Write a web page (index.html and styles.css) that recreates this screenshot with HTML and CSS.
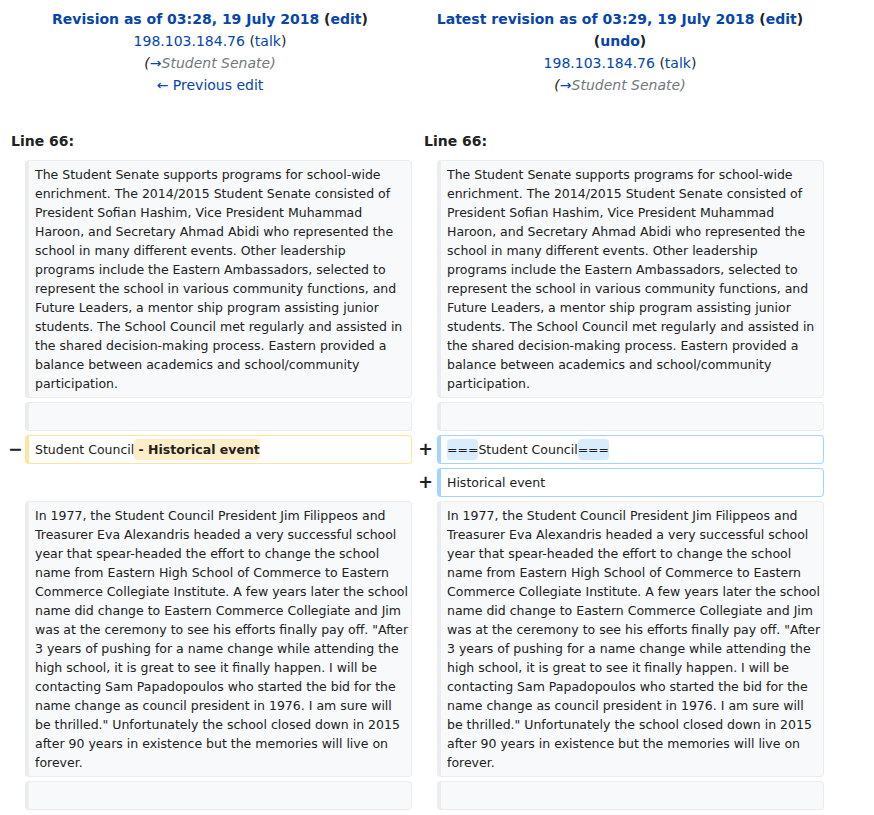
FILE: index.html
```html
<!DOCTYPE html>
<html>
<head>
<meta charset="utf-8">
<link rel="stylesheet" href="styles.css">
</head>
<body>
<div class="diff">
  <div class="rev-head">
    <div class="line title"><a href="#">Revision as of 03:28, 19 July 2018</a> <span class="paren">(<a href="#">edit</a>)</span></div>
    <div class="line"><a href="#">198.103.184.76</a> <span class="paren">(<a href="#">talk</a>)</span></div>
    <div class="line comment">(<a href="#">→</a>Student Senate)</div>
    <div class="line"><a href="#">← Previous edit</a></div>
  </div>
  <div class="rev-head">
    <div class="line title"><a href="#">Latest revision as of 03:29, 19 July 2018</a> <span class="paren">(<a href="#">edit</a>)</span></div>
    <div class="line title"><span class="paren">(<a href="#">undo</a>)</span></div>
    <div class="line"><a href="#">198.103.184.76</a> <span class="paren">(<a href="#">talk</a>)</span></div>
    <div class="line comment">(<a href="#">→</a>Student Senate)</div>
  </div>

  <div class="lineno">Line 66:</div>
  <div class="lineno lineno-right">Line 66:</div>

  <div class="marker"></div>
  <div class="cell context">The Student Senate supports programs for school-wide enrichment. The 2014/2015 Student Senate consisted of President Sofian Hashim, Vice President Muhammad Haroon, and Secretary Ahmad Abidi who represented the school in many different events. Other leadership programs include the Eastern Ambassadors, selected to represent the school in various community functions, and Future Leaders, a mentor ship program assisting junior students. The School Council met regularly and assisted in the shared decision-making process. Eastern provided a balance between academics and school/community participation.</div>
  <div class="marker"></div>
  <div class="cell context">The Student Senate supports programs for school-wide enrichment. The 2014/2015 Student Senate consisted of President Sofian Hashim, Vice President Muhammad Haroon, and Secretary Ahmad Abidi who represented the school in many different events. Other leadership programs include the Eastern Ambassadors, selected to represent the school in various community functions, and Future Leaders, a mentor ship program assisting junior students. The School Council met regularly and assisted in the shared decision-making process. Eastern provided a balance between academics and school/community participation.</div>

  <div class="marker"></div>
  <div class="cell context">&nbsp;</div>
  <div class="marker"></div>
  <div class="cell context">&nbsp;</div>

  <div class="marker">−</div>
  <div class="cell deleted">Student Council<del class="inl-del"> - Historical event</del></div>
  <div class="marker">+</div>
  <div class="cell added"><ins class="inl-ins">===</ins>Student Council<ins class="inl-ins">===</ins></div>

  <div class="marker"></div>
  <div class="blank"></div>
  <div class="marker">+</div>
  <div class="cell added">Historical event</div>

  <div class="marker"></div>
  <div class="cell context">In 1977, the Student Council President Jim Filippeos and Treasurer Eva Alexandris headed a very successful school year that spear-headed the effort to change the school name from Eastern High School of Commerce to Eastern Commerce Collegiate Institute. A few years later the school name did change to Eastern Commerce Collegiate and Jim was at the ceremony to see his efforts finally pay off. "After 3 years of pushing for a name change while attending the high school, it is great to see it finally happen. I will be contacting Sam Papadopoulos who started the bid for the name change as council president in 1976. I am sure will be thrilled." Unfortunately the school closed down in 2015 after 90 years in existence but the memories will live on forever.</div>
  <div class="marker"></div>
  <div class="cell context">In 1977, the Student Council President Jim Filippeos and Treasurer Eva Alexandris headed a very successful school year that spear-headed the effort to change the school name from Eastern High School of Commerce to Eastern Commerce Collegiate Institute. A few years later the school name did change to Eastern Commerce Collegiate and Jim was at the ceremony to see his efforts finally pay off. "After 3 years of pushing for a name change while attending the high school, it is great to see it finally happen. I will be contacting Sam Papadopoulos who started the bid for the name change as council president in 1976. I am sure will be thrilled." Unfortunately the school closed down in 2015 after 90 years in existence but the memories will live on forever.</div>

  <div class="marker"></div>
  <div class="cell context">&nbsp;</div>
  <div class="marker"></div>
  <div class="cell context">&nbsp;</div>
</div>
</body>
</html>
```

FILE: styles.css
```css
html, body {
  background: #ffffff;
}
body {
  margin: 0 8px;
  padding-top: 8px;
  font-family: "DejaVu Sans", sans-serif;
  font-size: 14px;
  color: #202122;
}
a {
  color: #0645ad;
  text-decoration: none;
}
.diff {
  display: grid;
  grid-template-columns: 13px 387px 17px 387px;
  column-gap: 4px;
  row-gap: 4px;
  width: 816px;
}
.rev-head {
  grid-column: span 2;
  text-align: center;
  line-height: 22px;
}
.title {
  font-weight: bold;
}
.paren {
  color: #202122;
}
.comment {
  font-style: italic;
  color: #72777d;
}
.comment::first-letter {
  color: #202122;
}
.lineno {
  grid-column: span 2;
  font-weight: bold;
  line-height: 22px;
  padding: 30px 0 4px 3px;
}
.lineno-right {
  padding-left: 8px;
}
.marker {
  font-weight: bold;
  font-size: 17.5px;
  line-height: 21px;
  text-align: right;
  align-self: center;
  color: #202122;
}
.cell {
  font-size: 12.5px;
  line-height: 19px;
  padding: 4px 2px 4px 6px;
  border-style: solid;
  border-width: 1px 1px 1px 4px;
  border-radius: 4px;
  word-wrap: break-word;
}
.context {
  background: #f8f9fa;
  border-color: #eaecf0;
}
.deleted {
  background: #ffffff;
  border-color: #ffe49c;
}
.added {
  background: #ffffff;
  border-color: #a3d3ff;
}
.inl-del {
  text-decoration: none;
  font-weight: bold;
  background: #feeec8;
  border-radius: 4px;
  padding: 3px 0;
}
.inl-ins {
  text-decoration: none;
  background: #d8ecff;
  border-radius: 4px;
  padding: 3px 0;
}
```
